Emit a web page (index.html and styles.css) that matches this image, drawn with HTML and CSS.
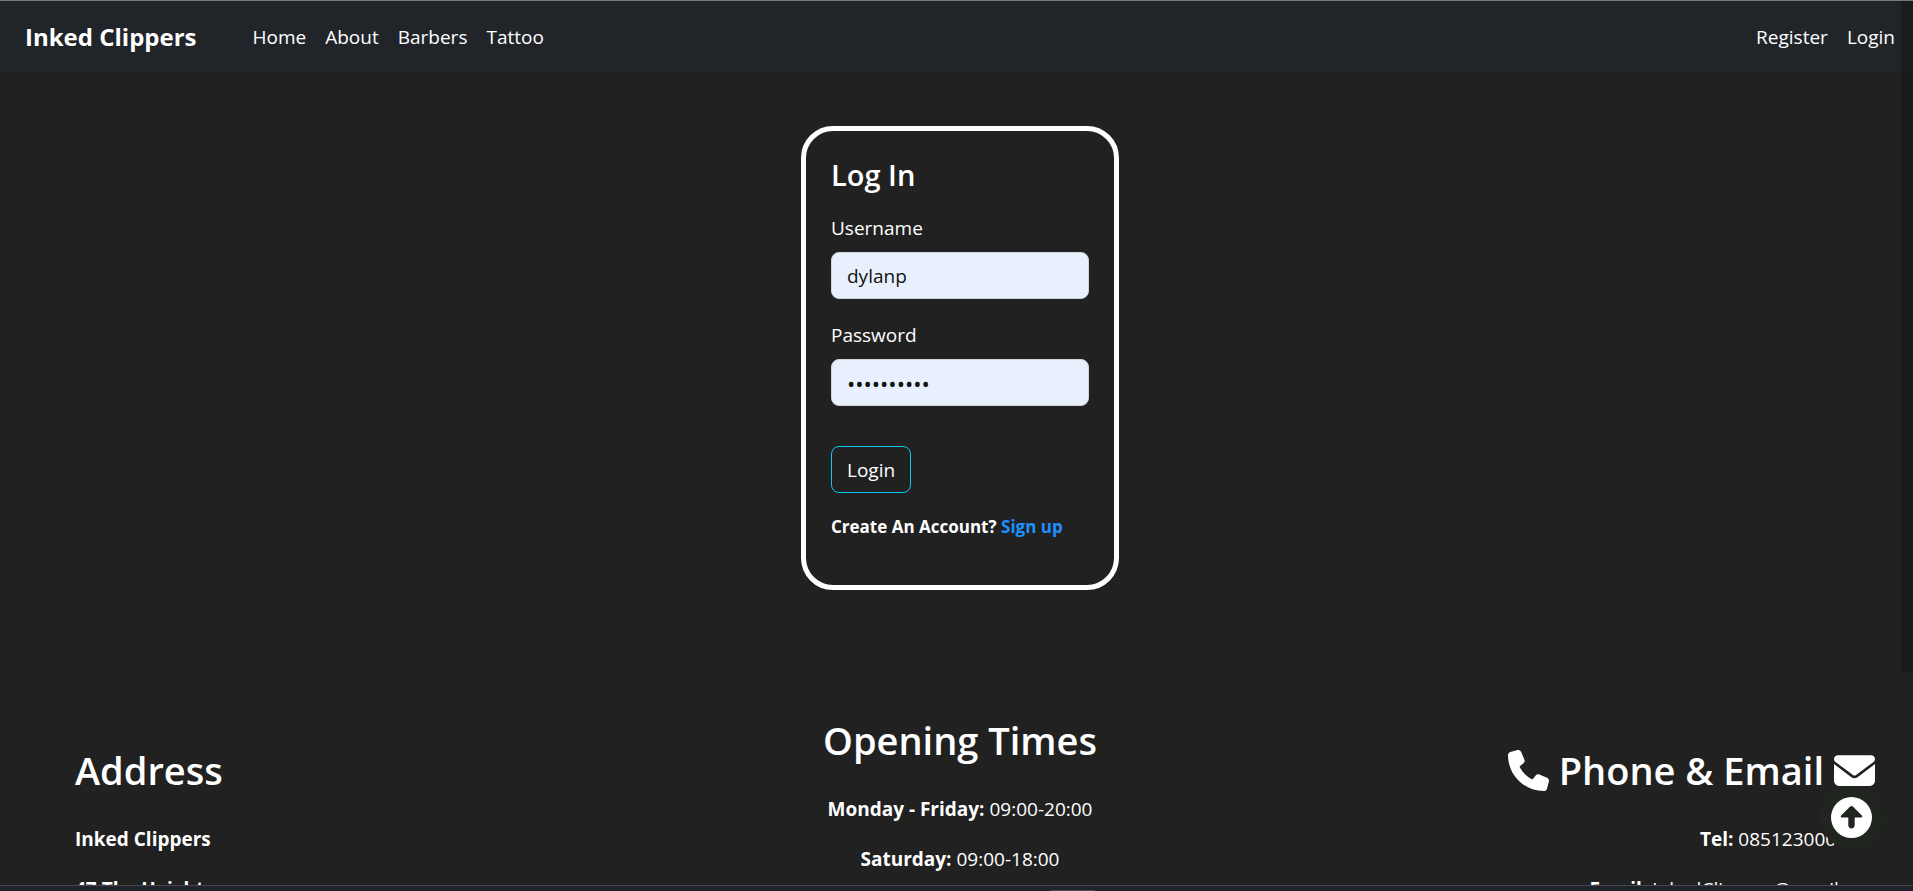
FILE: index.html
```
<!DOCTYPE html>
<html lang="en">
<head>
<meta charset="utf-8">
<title>Inked Clippers - Log In</title>
<link rel="stylesheet" href="styles.css">
</head>
<body>
<div class="page">
  <header class="navbar">
    <a class="brand" href="#">Inked Clippers</a>
    <nav class="nav-links" aria-label="Main">
      <a href="#">Home</a>
      <a href="#">About</a>
      <a href="#">Barbers</a>
      <a href="#">Tattoo</a>
    </nav>
    <nav class="nav-links account" aria-label="Account">
      <a href="#">Register</a>
      <a href="#">Login</a>
    </nav>
  </header>
  <main class="main">
    <form class="card">
      <h1 class="card-title">Log In</h1>
      <label class="label" for="username">Username</label>
      <input class="field" id="username" type="text" value="dylanp">
      <label class="label" for="password">Password</label>
      <input class="field field-password" id="password" type="password" value="clippers10">
      <button class="submit" type="button">Login</button>
      <p class="signup">Create An Account? <a href="#">Sign up</a></p>
    </form>
  </main>
  <footer class="footer">
    <section class="address">
      <h2>Address</h2>
      <p><b>Inked Clippers</b></p>
      <p><b>47 The Heights</b></p>
    </section>
    <section class="hours">
      <h2>Opening Times</h2>
      <p><b>Monday - Friday:</b> 09:00-20:00</p>
      <p><b>Saturday:</b> 09:00-18:00</p>
    </section>
    <section class="contact">
      <h2>
        <svg class="icon" viewBox="0 0 512 512" aria-hidden="true"><path d="M164.900 24.600c-7.700-18.600-28-28.500-47.400-23.200l-88 24C12.100 30.200 0 46 0 64c0 247.400 200.600 448 448 448c18 0 33.800-12.100 38.600-29.500l24-88c5.300-19.400-4.600-39.700-23.200-47.400l-96-40c-16.300-6.800-35.200-2.100-46.300 11.600L304.700 368C234.300 334.700 177.300 277.700 144 207.300L193.300 167c13.700-11.200 18.400-30 11.600-46.300l-40-96z"/></svg>
        <span>Phone &amp; Email</span>
        <svg class="icon" viewBox="0 0 512 512" aria-hidden="true"><path d="M48 64C21.500 64 0 85.500 0 112c0 15.100 7.100 29.300 19.200 38.400L236.800 313.600c11.400 8.500 27 8.500 38.400 0L492.800 150.400c12.100-9.100 19.200-23.300 19.200-38.400c0-26.500-21.500-48-48-48H48zM0 176V384c0 35.300 28.700 64 64 64H448c35.300 0 64-28.700 64-64V176L294.400 339.200c-22.800 17.100-54 17.100-76.800 0L0 176z"/></svg>
      </h2>
      <p class="tel"><b>Tel:</b> 0851230000</p>
      <p><b>Email:</b> InkedClippers@gmail.com</p>
    </section>
  </footer>
  <div class="scroll-thumb"></div>
  <button class="to-top" type="button" aria-label="Back to top">
    <svg class="icon" viewBox="0 0 512 512" aria-hidden="true"><path d="M256 0a256 256 0 1 0 0 512A256 256 0 1 0 256 0zM385 231c9.400 9.400 6.300 25-7 25H296V352c0 22.100-17.900 40-40 40s-40-17.900-40-40V256H134c-13.300 0-16.400-15.600-7-25L239 119c9.400-9.400 24.600-9.400 33.900 0z"/></svg>
  </button>
</div>
<div class="taskbar"><span class="taskbar-tab"></span></div>
</body>
</html>
```
FILE: styles.css
```
* { box-sizing: border-box; }

body {
  display: flex;
  flex-direction: column;
  height: 100vh;
  margin: 0;
  overflow: hidden;
  border-top: 1px solid #7b7875;
  background: #212121;
  color: #fff;
  font: 19px/30px "Open Sans", "Noto Sans", sans-serif;
}

a { color: inherit; text-decoration: none; }
h1, h2, p { margin: 0; }

.page {
  position: relative;
  flex: 1;
  min-height: 0;
  overflow: hidden;
}

.navbar {
  display: flex;
  align-items: center;
  padding: 17px 18px 15px 25px;
  background: #212529;
}
.brand {
  margin-right: 56px;
  font-size: 24px;
  line-height: 38px;
  font-weight: 700;
}
.nav-links { display: flex; gap: 19px; }
.account { margin-left: auto; }

.main {
  display: flex;
  justify-content: center;
  padding: 55px 0 126px 7px;
}
.card {
  display: flex;
  flex-direction: column;
  align-items: flex-start;
  width: 318px;
  padding: 26px 25px 45px;
  border: 5px solid #fff;
  border-radius: 32px;
}
.card-title {
  margin-bottom: 20px;
  font-size: 29px;
  line-height: 36px;
  font-weight: 600;
}
.label { margin-bottom: 9px; }
.field {
  width: 100%;
  height: 47px;
  margin-bottom: 21px;
  padding: 0 15px;
  border: 1px solid #ced4da;
  border-radius: 8px;
  background: #e8f0fe;
  color: #111;
  font: inherit;
}
.field-password { font-size: 22px; }
.submit {
  margin-top: 19px;
  padding: 8px 15px 7px;
  border: 1px solid #0dcaf0;
  border-radius: 8px;
  background: transparent;
  color: #fff;
  font: inherit;
}
.signup {
  margin-top: 21px;
  font-size: 17px;
  line-height: 26px;
  font-weight: 700;
}
.signup a { color: #1e90ff; }

.footer {
  display: grid;
  grid-template-columns: 1fr auto 1fr;
  padding: 0 31px 0 38px;
}
.footer h2 {
  margin-bottom: 30px;
  font-size: 38px;
  line-height: 48px;
  font-weight: 600;
}
.footer p { margin-bottom: 20px; }
.address, .contact { padding-top: 30px; }
.address { padding-left: 37px; }
.hours { text-align: center; }
.contact { text-align: right; }
.contact h2 {
  display: flex;
  align-items: center;
  justify-content: flex-end;
  gap: 10px;
  padding-right: 7px;
}
.contact .tel { padding-right: 35px; }
.icon {
  flex: none;
  width: 41px;
  height: 41px;
  fill: currentColor;
}

.scroll-thumb {
  position: absolute;
  top: 0;
  right: 0;
  width: 12px;
  height: 671px;
  background: #00000033;
}
.to-top {
  position: absolute;
  right: 30px;
  bottom: 36px;
  display: grid;
  place-items: center;
  width: 63px;
  height: 63px;
  padding: 0;
  border: 0;
  border-radius: 50%;
  background: #20251f;
  color: #fff;
}

.taskbar {
  display: flex;
  justify-content: center;
  align-items: flex-end;
  height: 6px;
  padding-left: 233px;
  border-top: 1px solid #46484b;
  background: #20242a;
}
.taskbar-tab {
  width: 44px;
  height: 1px;
  background: #4a4c4f;
}
```
